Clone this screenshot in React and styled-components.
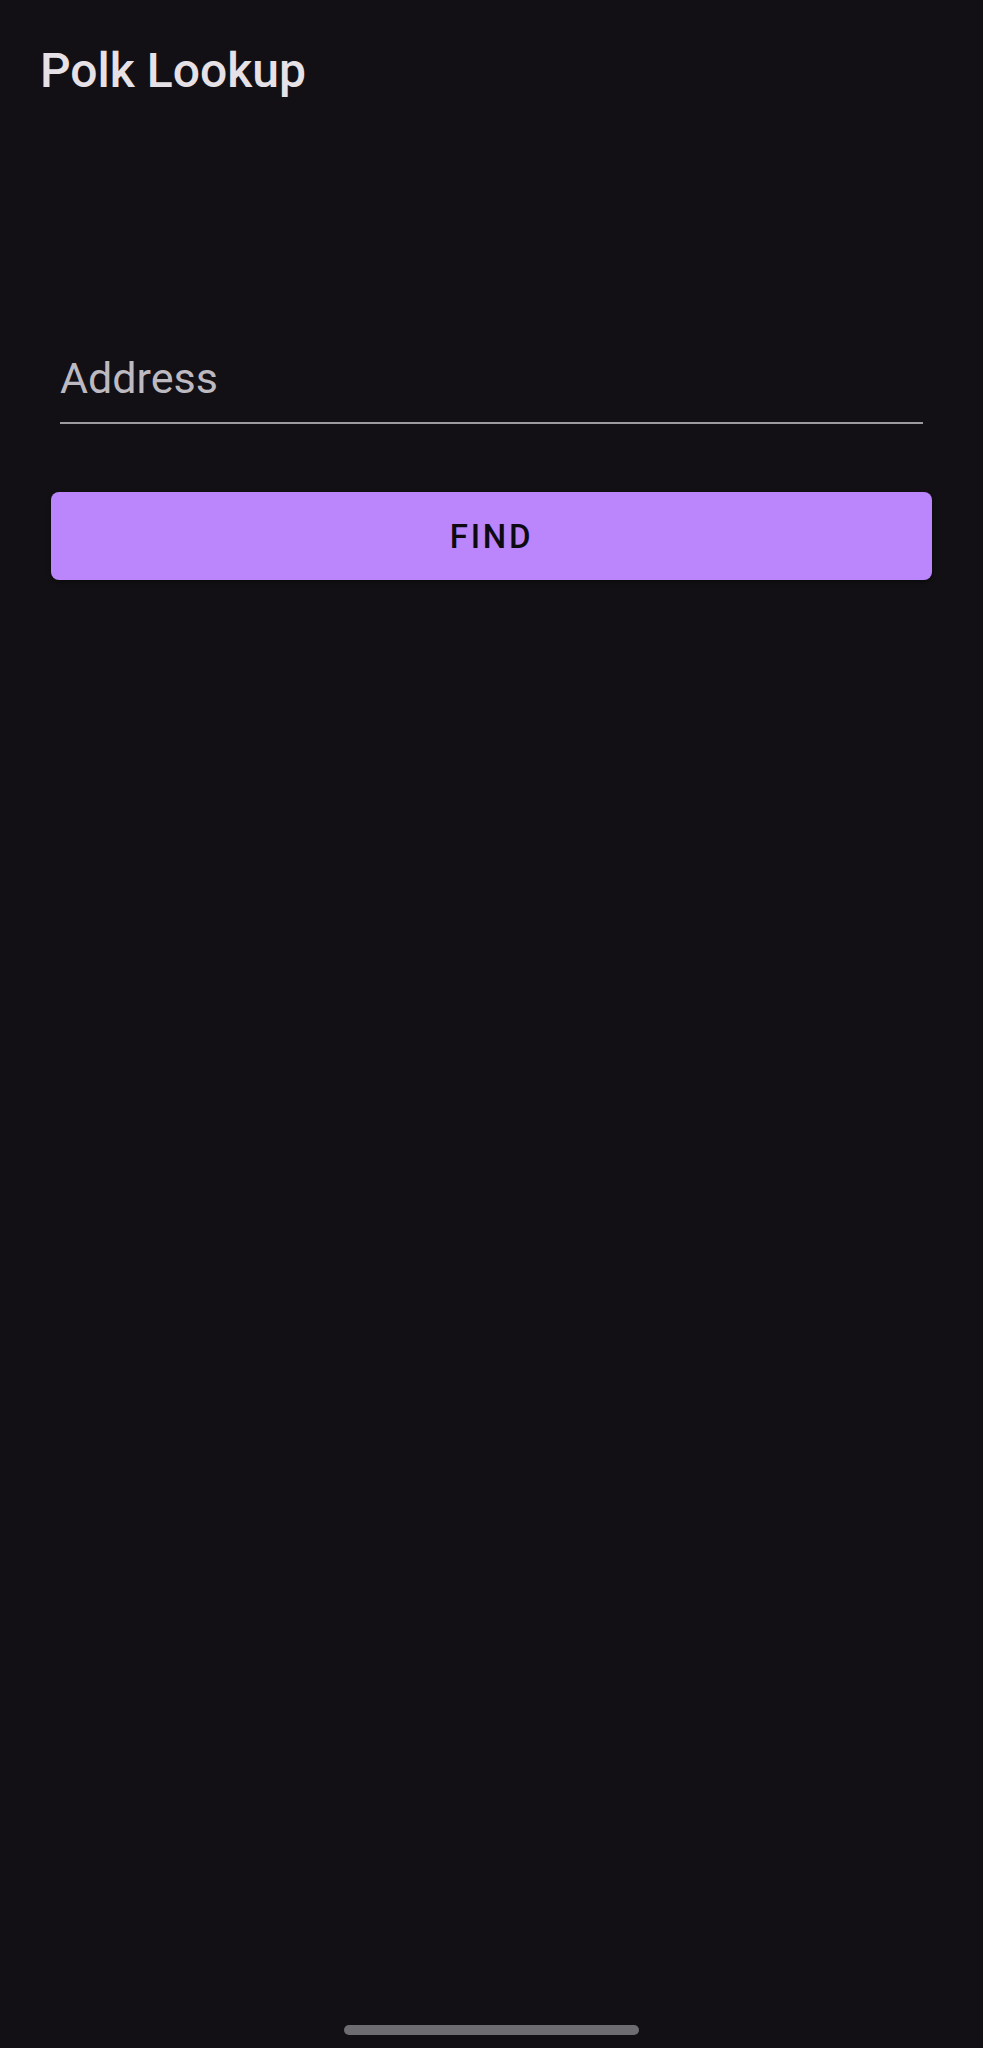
import React, { useState } from 'react';
import styled, { createGlobalStyle } from 'styled-components';

const GlobalStyle = createGlobalStyle`
  html, body {
    margin: 0;
    padding: 0;
    background-color: #121014;
  }
  * {
    box-sizing: border-box;
  }
`;

const Page = styled.div`
  display: flex;
  flex-direction: column;
  height: 100vh;
  width: 100%;
  background-color: #121014;
  font-family: Roboto, "Noto Sans", sans-serif;
  overflow: hidden;
`;

const TopBar = styled.header`
  display: flex;
  align-items: center;
  padding: 42px 40px 0;
`;

const Title = styled.h1`
  margin: 0;
  font-size: 48px;
  font-weight: 500;
  line-height: normal;
  color: #e6e1e6;
`;

const Form = styled.form`
  display: flex;
  flex-direction: column;
  padding-top: 254px;
`;

const Field = styled.div`
  margin: 0 60px;
  border-bottom: 2px solid #9c999f;
`;

const Input = styled.input`
  display: block;
  width: 100%;
  padding: 0 0 19px;
  border: none;
  background: transparent;
  font-family: inherit;
  font-size: 43px;
  line-height: normal;
  color: #e6e1e6;
  &::placeholder {
    color: #bdb9c0;
  }
  &:focus {
    outline: none;
  }
`;

const Button = styled.button`
  display: flex;
  align-items: center;
  justify-content: center;
  height: 88px;
  margin: 68px 51px 0;
  border: none;
  border-radius: 8px;
  background-color: #bb86fc;
  color: #0d0a12;
  font-family: inherit;
  font-size: 33px;
  font-weight: 500;
  letter-spacing: 2.8px;
  text-transform: uppercase;
  cursor: pointer;
  box-shadow: 0 2px 4px rgba(0, 0, 0, 0.4);
`;

const NavArea = styled.div`
  display: flex;
  justify-content: center;
  margin-top: auto;
  padding-bottom: 13px;
`;

const NavHandle = styled.div`
  width: 295px;
  height: 10px;
  border-radius: 5px;
  background-color: #6d6c70;
`;

const App = () => {
  const [address, setAddress] = useState('');

  const handleSubmit = (e) => {
    e.preventDefault();
  };

  return (
    <>
      <GlobalStyle />
      <Page>
        <TopBar>
          <Title>Polk Lookup</Title>
        </TopBar>
        <Form onSubmit={handleSubmit}>
          <Field>
            <Input
              type="text"
              value={address}
              onChange={(e) => setAddress(e.target.value)}
              placeholder="Address"
            />
          </Field>
          <Button type="submit">Find</Button>
        </Form>
        <NavArea>
          <NavHandle />
        </NavArea>
      </Page>
    </>
  );
};

export default App;
